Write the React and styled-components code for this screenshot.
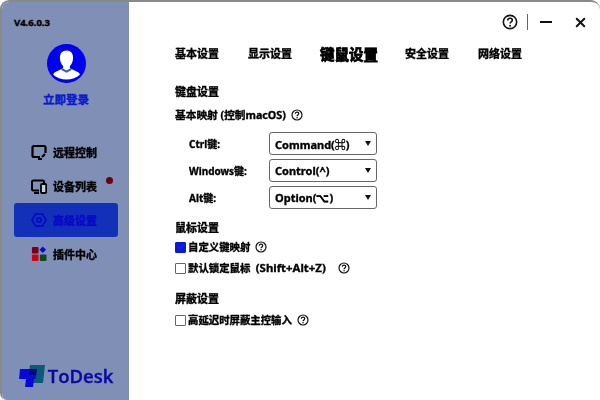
import React from "react"
import styled, { createGlobalStyle } from "styled-components"
import { Check, X } from "lucide-react"

const Global = createGlobalStyle`
  html, body {
    margin: 0;
    padding: 0;
    width: 600px;
    height: 400px;
    overflow: hidden;
    background: #fff;
    font-family: "Noto Sans", "Noto Sans CJK SC", sans-serif;
    color: #000;
  }
`

const Window = styled.div`
  width: 600px;
  height: 400px;
  box-sizing: border-box;
  display: flex;
  position: relative;
  overflow: hidden;
  background: #fff;
  border-top: 2px solid #8a8a8a;
  border-left: 2px solid #8a8a8a;
  border-top-left-radius: 9px;
  border-top-right-radius: 9px;
  border-bottom-left-radius: 7px;
  filter: blur(0.3px);
  -webkit-text-stroke: 0.35px currentColor;
`

const Sidebar = styled.aside`
  width: 127px;
  flex: none;
  background: #7f8fb5;
  display: flex;
  flex-direction: column;
  align-items: center;
`

const Version = styled.div`
  align-self: flex-start;
  margin: 15px 0 0 12px;
  font-size: 9.5px;
  line-height: 12px;
  font-weight: 700;
`

const Avatar = styled.div`
  width: 39px;
  height: 39px;
  margin: 15px 0 0 1px;
  border-radius: 50%;
  overflow: hidden;
  background: #0000ee;
`

const Login = styled.div`
  margin: 9px 0 0 1px;
  font-size: 11.5px;
  line-height: 16px;
  font-weight: 700;
  color: #0a18d0;
`

const Nav = styled.nav`
  align-self: stretch;
  margin: 27px 0 0 12px;
  width: 104px;
  display: flex;
  flex-direction: column;
`

const NavItem = styled.div`
  height: 34px;
  display: flex;
  align-items: center;
  gap: 6px;
  padding-left: 17px;
  position: relative;
  border-radius: 3px;
  font-size: 11px;
  font-weight: 700;
  background: ${p => (p.$active ? "#1230b8" : "transparent")};
  color: ${p => (p.$active ? "#0808c8" : "#000")};
`

const Dot = styled.span`
  position: absolute;
  top: 8px;
  right: 5px;
  width: 7px;
  height: 7px;
  border-radius: 50%;
  background: #6b0010;
`

const IconBox = styled.svg`
  width: 16px;
  height: 16px;
  flex: none;
`

const Logo = styled.div`
  margin-top: auto;
  margin-bottom: 11px;
  display: flex;
  align-items: center;
  gap: 2px;
  font-family: "Open Sans", sans-serif;
  font-size: 18.5px;
  font-weight: 600;
  line-height: 24px;
  color: #0808a8;
`

const LogoText = styled.span`
  margin-bottom: 1px;
`

const Main = styled.main`
  flex: 1;
  min-width: 0;
  display: flex;
  flex-direction: column;
  padding-left: 46px;
`

const TitleBar = styled.div`
  height: 26px;
  margin-top: 7px;
  padding-right: 12px;
  display: flex;
  align-items: center;
  justify-content: flex-end;
`

const Divider = styled.span`
  width: 1px;
  height: 16px;
  margin: 0 12px 0 9px;
  background: #666;
`

const Minimize = styled.span`
  width: 12px;
  height: 2px;
  margin-right: 21px;
  background: #111;
`

const Tabs = styled.div`
  display: flex;
  align-items: center;
  height: 24px;
  margin-top: 7px;
`

const Tab = styled.div`
  width: ${p => p.$width}px;
  font-weight: 700;
  white-space: nowrap;
  font-size: ${p => (p.$active ? "14.5px" : "11px")};
  line-height: 24px;
  -webkit-text-stroke: ${p => (p.$active ? "0.8px" : "0.35px")} currentColor;
`

const Heading = styled.div`
  font-size: 11px;
  line-height: 16px;
  font-weight: 700;
  margin-top: ${p => p.$top}px;
`

const Line = styled.div`
  display: flex;
  align-items: center;
  font-size: ${p => p.$size || 10.4}px;
  line-height: 16px;
  font-weight: 700;
  margin-top: ${p => p.$top}px;
  white-space: pre;
`

const Keys = styled.span`
  font-size: 11.4px;
`

const Help = styled.svg`
  width: ${p => p.$size}px;
  height: ${p => p.$size}px;
  flex: none;
  margin-left: ${p => p.$left}px;
`

const MapRows = styled.div`
  margin-top: 9px;
  padding-left: 14px;
  display: flex;
  flex-direction: column;
  gap: 4px;
`

const MapRow = styled.div`
  display: flex;
  align-items: center;
  font-size: 10px;
  font-weight: 700;
`

const MapLabel = styled.label`
  width: 80px;
  white-space: nowrap;
`

const Select = styled.div`
  width: 108px;
  height: 23px;
  box-sizing: border-box;
  border: 1px solid #666;
  border-radius: 3px;
  padding: 0 5px;
  display: flex;
  align-items: center;
  justify-content: space-between;
  font-size: 11px;
  font-weight: 700;
`

const Caret = styled.span`
  width: 0;
  height: 0;
  border-left: 3.5px solid transparent;
  border-right: 3.5px solid transparent;
  border-top: 5px solid #111;
`

const Box = styled.span`
  width: 11px;
  height: 11px;
  box-sizing: border-box;
  flex: none;
  margin-right: 2px;
  border-radius: 1px;
  border: 1px solid ${p => (p.$checked ? "#0a1ad8" : "#666")};
  background: ${p => (p.$checked ? "#0a1ad8" : "#fff")};
  display: flex;
  align-items: center;
  justify-content: center;
  color: #2a3ae8;
`

const HelpIcon = ({ left = 0, size = 12 }) => (
  <Help $left={left} $size={size} viewBox="0 0 24 24">
    <circle cx="12" cy="12" r="10" fill="none" stroke="#111" strokeWidth="2.4" />
    <path d="M8.6 9.6c0-2 1.5-3.3 3.5-3.3s3.4 1.2 3.4 2.9c0 2.6-3.4 2.6-3.4 5.2" fill="none" stroke="#111" strokeWidth="2.4" />
    <circle cx="12.1" cy="17.6" r="1.5" fill="#111" />
  </Help>
)

const selects = [
  ["Ctrl键:", "Command(⌘)"],
  ["Windows键:", "Control(^)"],
  ["Alt键:", "Option(⌥)"],
]

export default function App() {
  return (
    <>
      <Global />
      <Window>
        <Sidebar>
          <Version>V4.6.0.3</Version>
          <Avatar>
            <svg width="39" height="39" viewBox="0 0 39 39">
              <path d="M19.5 6.5c4.3 0 6.6 3 6.6 7.2 0 3.4-1.400 6.500-3.200 8.200v2.400l7.800 3.800c1.200.6 1.800 1.500 2.100 2.600-3.200 3-8 4.900-13.300 4.900s-10-1.900-13.200-4.900c.3-1.100.9-2 2.100-2.600l7.700-3.800v-2.400c-1.800-1.700-3.200-4.800-3.200-8.200 0-4.200 2.300-7.200 6.600-7.200z" fill="#fff" />
              <path d="M16 24.500l3.500 2 3.500-2 2 1.200-5.500 3-5.500-3z" fill="#2a5fc8" />
            </svg>
          </Avatar>
          <Login>立即登录</Login>
          <Nav>
            <NavItem>
              <IconBox viewBox="0 0 16 16" fill="none" stroke="#000" strokeWidth="2.2">
                <path d="M9 13H3A1.500 1.500 0 0 1 1.500 11.500V3.500A1.500 1.500 0 0 1 3 2h10a1.500 1.500 0 0 1 1.500 1.500V9" />
                <path d="M7 15h4M11 13l3-3" />
              </IconBox>
              远程控制
            </NavItem>
            <NavItem>
              <IconBox viewBox="0 0 16 16" fill="none" stroke="#000" strokeWidth="2">
                <path d="M8 12.500H2.200A1.200 1.200 0 0 1 1 11.300V3.700a1.200 1.200 0 0 1 1.200-1.200h9.600A1.200 1.200 0 0 1 13 3.700V5" />
                <path d="M3 15h5" />
                <rect x="10" y="6" width="5.200" height="9" rx="1" fill="#c8d0e4" strokeWidth="1.800" />
              </IconBox>
              设备列表
              <Dot />
            </NavItem>
            <NavItem $active>
              <IconBox viewBox="0 0 17 17" fill="none" stroke="#0808c8" strokeWidth="1.800">
                <path d="M5 2h7l4 6.500-4 6.500H5L1 8.500z" />
                <circle cx="8.500" cy="8.500" r="2.300" />
              </IconBox>
              高级设置
            </NavItem>
            <NavItem>
              <IconBox viewBox="0 0 17 17">
                <rect x="1" y="1" width="7" height="7" rx="1" fill="#7a0010" />
                <rect x="1" y="9" width="7" height="7" rx="1" fill="#d00010" />
                <path d="M12.500.500l3.500 3.500-3.500 3.500L9 4z" fill="#0808d8" />
                <rect x="9.500" y="9" width="7" height="7" rx="1" fill="#0a4a20" />
              </IconBox>
              插件中心
            </NavItem>
          </Nav>
          <Logo>
            <svg width="28" height="26" viewBox="0 0 28 26">
              <path d="M12 2h15l-2 18H10z" fill="#0a5a78" />
              <path d="M2 6h17l-1.500 10H16l-1 8H7l1-8H1z" fill="#0808d8" />
              <path d="M11.500 6H19l-1 6h-7z" fill="#08087a" />
            </svg>
            <LogoText>ToDesk</LogoText>
          </Logo>
        </Sidebar>
        <Main>
          <TitleBar>
            <HelpIcon size={16} />
            <Divider />
            <Minimize />
            <X size={15} strokeWidth={3.2} color="#111" />
          </TitleBar>
          <Tabs>
            <Tab $width={73}>基本设置</Tab>
            <Tab $width={72}>显示设置</Tab>
            <Tab $width={85} $active>键鼠设置</Tab>
            <Tab $width={73}>安全设置</Tab>
            <Tab $width={60}>网络设置</Tab>
          </Tabs>
          <Heading $top={18}>键盘设置</Heading>
          <Line $top={7} $size={10.7}>基本映射 (控制macOS)<HelpIcon left={5} /></Line>
          <MapRows>
            {selects.map(([label, value]) => (
              <MapRow key={label}>
                <MapLabel>{label}</MapLabel>
                <Select>
                  {value}
                  <Caret />
                </Select>
              </MapRow>
            ))}
          </MapRows>
          <Heading $top={11}>鼠标设置</Heading>
          <Line $top={3}>
            <Box $checked><Check size={8} strokeWidth={2} /></Box>
            自定义键映射<HelpIcon left={5} />
          </Line>
          <Line $top={5}>
            <Box />
            默认锁定鼠标  <Keys>(Shift+Alt+Z)</Keys><HelpIcon left={12} />
          </Line>
          <Heading $top={15}>屏蔽设置</Heading>
          <Line $top={5}>
            <Box />
            高延迟时屏蔽主控输入<HelpIcon left={5} />
          </Line>
        </Main>
      </Window>
    </>
  )
}
